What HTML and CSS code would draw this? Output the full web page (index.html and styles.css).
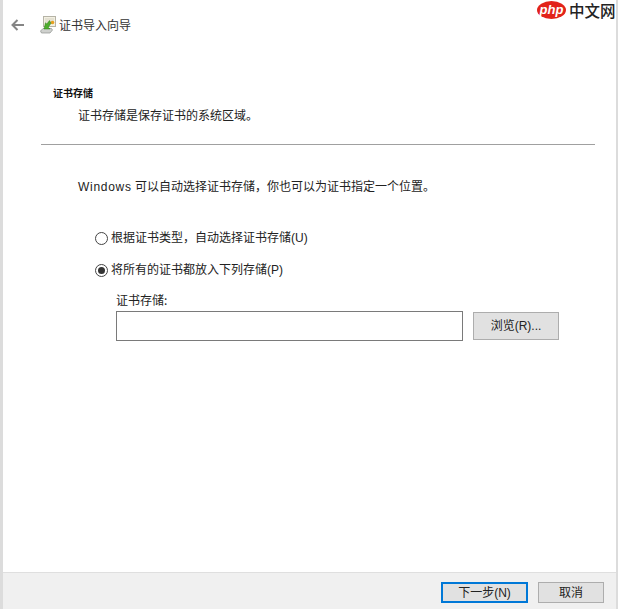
FILE: index.html
```html
<!DOCTYPE html>
<html lang="zh-CN">
<head>
<meta charset="utf-8">
<title>证书导入向导</title>
<link rel="stylesheet" href="styles.css">
</head>
<body>
<div class="window">
  <header class="titlebar">
    <svg class="back" width="13" height="12" viewBox="0 0 13 12"><path d="M6.500 1 1.500 6l5 5M2 6h11" fill="none" stroke="#858585" stroke-width="2"/></svg>
    <svg class="wizard" width="16" height="18" viewBox="0 0 16 18">
      <rect x="3.500" y="0.500" width="12" height="10" fill="#f3f0e2" stroke="#b5b3a6"/>
      <rect x="5" y="2" width="9" height="6" fill="#e4e1d2"/>
      <circle cx="12.500" cy="6.500" r="1.800" fill="#e8a020"/>
      <path d="M0.500 15 3 12.500h8.500l1 1.500-2.500 3H1.500z" fill="#cfd1ce" stroke="#8d918d" stroke-width=".7"/>
      <path d="M9.500 4.500 6.800 8 5.500 6.800 4 13h6L8.300 11.200 11 7.200z" fill="#4fae2e" stroke="#2f7d18" stroke-width=".5"/>
    </svg>
    <span class="title">证书导入向导</span>
  </header>
  <main class="content">
    <h1 class="section-title">证书存储</h1>
    <p class="section-desc">证书存储是保存证书的系统区域。</p>
    <hr class="divider">
    <p class="intro"><span class="latin">Windows</span> 可以自动选择证书存储，你也可以为证书指定一个位置。</p>
    <div class="options">
      <label class="option"><span class="radio"></span>根据证书类型，自动选择证书存储(U)</label>
      <label class="option"><span class="radio checked"></span>将所有的证书都放入下列存储(P)</label>
    </div>
    <div class="store">
      <div class="store-label">证书存储:</div>
      <div class="store-row">
        <div class="store-input"></div>
        <button class="btn browse">浏览(R)...</button>
      </div>
    </div>
  </main>
  <footer class="footer">
    <button class="btn next">下一步(N)</button>
    <button class="btn cancel">取消</button>
  </footer>
</div>
<div class="logo">
  <span class="logo-badge">php</span><span class="logo-text">中文网</span>
</div>
</body>
</html>
```
FILE: styles.css
```css
* { box-sizing: border-box; }
html, body { margin: 0; padding: 0; background: #fff; }
body {
  width: 618px;
  height: 609px;
  overflow: hidden;
  position: relative;
  font-family: "Noto Sans CJK SC", "Liberation Sans", sans-serif;
  font-size: 12px;
  color: #222;
}
.window {
  width: 618px;
  height: 609px;
  display: flex;
  flex-direction: column;
  border-left: 3px solid #dcdcdc;
  border-right: 2px solid #dcdcdc;
  background: #fff;
}
.titlebar {
  display: flex;
  align-items: center;
  height: 50px;
  flex: none;
  padding-left: 8px;
}
.back { margin-right: 15px; }
.wizard { margin-right: 3px; margin-left: 1px; }
.title { font-size: 12px; color: #333; line-height: 16px; }
.content { flex: 1; padding: 36px 21px 0 38px; }
.section-title { margin: 0; font-size: 10px; font-weight: 700; line-height: 14px; margin-left: 12px; color: #111; }
.section-desc { margin: 7px 0 0 37px; line-height: 16px; color: #222; }
.divider { margin: 21px 0 0; border: 0; border-top: 1px solid #a0a0a0; }
.intro { margin: 33px 0 0 37px; line-height: 18px; font-family: "Liberation Sans", "Noto Sans CJK SC", sans-serif; }
.latin { letter-spacing: 0.7px; }
.options { margin: 34px 0 0 54px; display: flex; flex-direction: column; gap: 16px; }
.option { display: flex; align-items: center; gap: 3px; line-height: 16px; font-family: "Liberation Sans", "Noto Sans CJK SC", sans-serif; }
.radio { width: 13px; height: 13px; border: 1px solid #444; border-radius: 50%; background: #fff; display: flex; align-items: center; justify-content: center; }
.radio.checked::after { content: ""; width: 7px; height: 7px; background: #333; border-radius: 50%; }
.store { margin: 14px 0 0 75px; }
.store-label { line-height: 16px; }
.store-row { display: flex; align-items: flex-start; gap: 10px; margin-top: 3px; }
.store-input { width: 347px; height: 30px; border: 1px solid #7a7a7a; background: #fff; }
.btn {
  font: inherit;
  font-family: "Liberation Sans", "Noto Sans CJK SC", sans-serif;
  font-size: 12px;
  color: #222;
  background: #e1e1e1;
  border: 1px solid #adadad;
  padding: 0;
  line-height: 16px;
}
.browse { width: 86px; height: 28px; margin-top: 1px; }
.footer {
  flex: none;
  height: 37px;
  background: #f0f0f0;
  border-top: 1px solid #dfdfdf;
  display: flex;
  justify-content: flex-end;
  align-items: flex-start;
  gap: 10px;
  padding: 9px 12px 0 0;
}
.next { width: 87px; height: 21px; border: 2px solid #0078d7; }
.cancel { width: 66px; height: 21px; }
.logo {
  position: absolute;
  top: 1px;
  left: 537px;
  display: flex;
  align-items: center;
  gap: 3px;
}
.logo-badge {
  width: 29px;
  height: 18px;
  border-radius: 50%;
  background: #e2231a;
  color: #fff;
  font: italic 700 13px/17px "Liberation Sans", sans-serif;
  text-align: center;
}
.logo-text { font-size: 15.500px; font-weight: 500; line-height: 18px; color: #222; }
```
